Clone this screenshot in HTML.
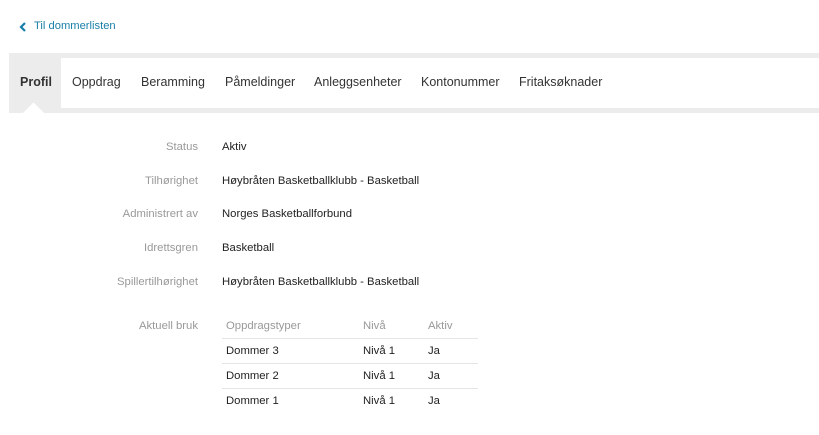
<!DOCTYPE html>
<html><head><style>
body{margin:0;width:819px;height:435px;background:#fff;font-family:"Liberation Sans",sans-serif;position:relative;overflow:hidden;color:#222}
.a{position:absolute;white-space:nowrap}
.back{left:20px;top:20px;font-size:11.2px;color:#1a7fa8}
.bar{position:absolute;left:9px;top:53px;width:810px;height:60px;background:#ececec}
.inner{position:absolute;left:61px;top:58px;width:758px;height:50px;background:#fff}
.tab{position:absolute;top:75px;font-size:12.5px;color:#333}
.lbl{font-size:11.3px;color:#999;right:621px;text-align:right}
.val{font-size:11.3px;color:#222;left:222px}
.t{font-size:11.3px}
.line{position:absolute;left:222px;width:256px;height:1px;background:#e6e6e6}
</style></head><body>
<svg class="a" style="left:19px;top:22px" width="8" height="10" viewBox="0 0 8 10"><path d="M6 1L2 5L6 9" stroke="#1a7fa8" stroke-width="2.2" fill="none"/></svg>
<div class="a back" style="left:34px">Til dommerlisten</div>
<div class="bar"></div><div class="inner"></div>
<svg class="a" style="left:23px;top:101px" width="21" height="12"><path d="M0 12L10.5 1.5L21 12Z" fill="#fff"/></svg>
<div class="tab a" style="left:20px;font-weight:bold">Profil</div>
<div class="tab a" style="left:72px">Oppdrag</div>
<div class="tab a" style="left:141px">Beramming</div>
<div class="tab a" style="left:225px">Påmeldinger</div>
<div class="tab a" style="left:314px">Anleggsenheter</div>
<div class="tab a" style="left:421px">Kontonummer</div>
<div class="tab a" style="left:519px">Fritaksøknader</div>
<div class="a lbl" style="top:141px">Status</div><div class="a val" style="top:141px">Aktiv</div>
<div class="a lbl" style="top:175px">Tilhørighet</div><div class="a val" style="top:175px">Høybråten Basketballklubb - Basketball</div>
<div class="a lbl" style="top:208px">Administrert av</div><div class="a val" style="top:208px">Norges Basketballforbund</div>
<div class="a lbl" style="top:242px">Idrettsgren</div><div class="a val" style="top:242px">Basketball</div>
<div class="a lbl" style="top:276px">Spillertilhørighet</div><div class="a val" style="top:276px">Høybråten Basketballklubb - Basketball</div>
<div class="a lbl" style="top:320px">Aktuell bruk</div>
<div class="a t" style="top:320px;left:226px;color:#999">Oppdragstyper</div>
<div class="a t" style="top:320px;left:363px;color:#999">Nivå</div>
<div class="a t" style="top:320px;left:428px;color:#999">Aktiv</div>
<div class="line" style="top:338px"></div>
<div class="a t" style="top:345px;left:226px">Dommer 3</div><div class="a t" style="top:345px;left:363px">Nivå 1</div><div class="a t" style="top:345px;left:428px">Ja</div>
<div class="line" style="top:363px"></div>
<div class="a t" style="top:370px;left:226px">Dommer 2</div><div class="a t" style="top:370px;left:363px">Nivå 1</div><div class="a t" style="top:370px;left:428px">Ja</div>
<div class="line" style="top:388px"></div>
<div class="a t" style="top:395px;left:226px">Dommer 1</div><div class="a t" style="top:395px;left:363px">Nivå 1</div><div class="a t" style="top:395px;left:428px">Ja</div>
</body></html>
